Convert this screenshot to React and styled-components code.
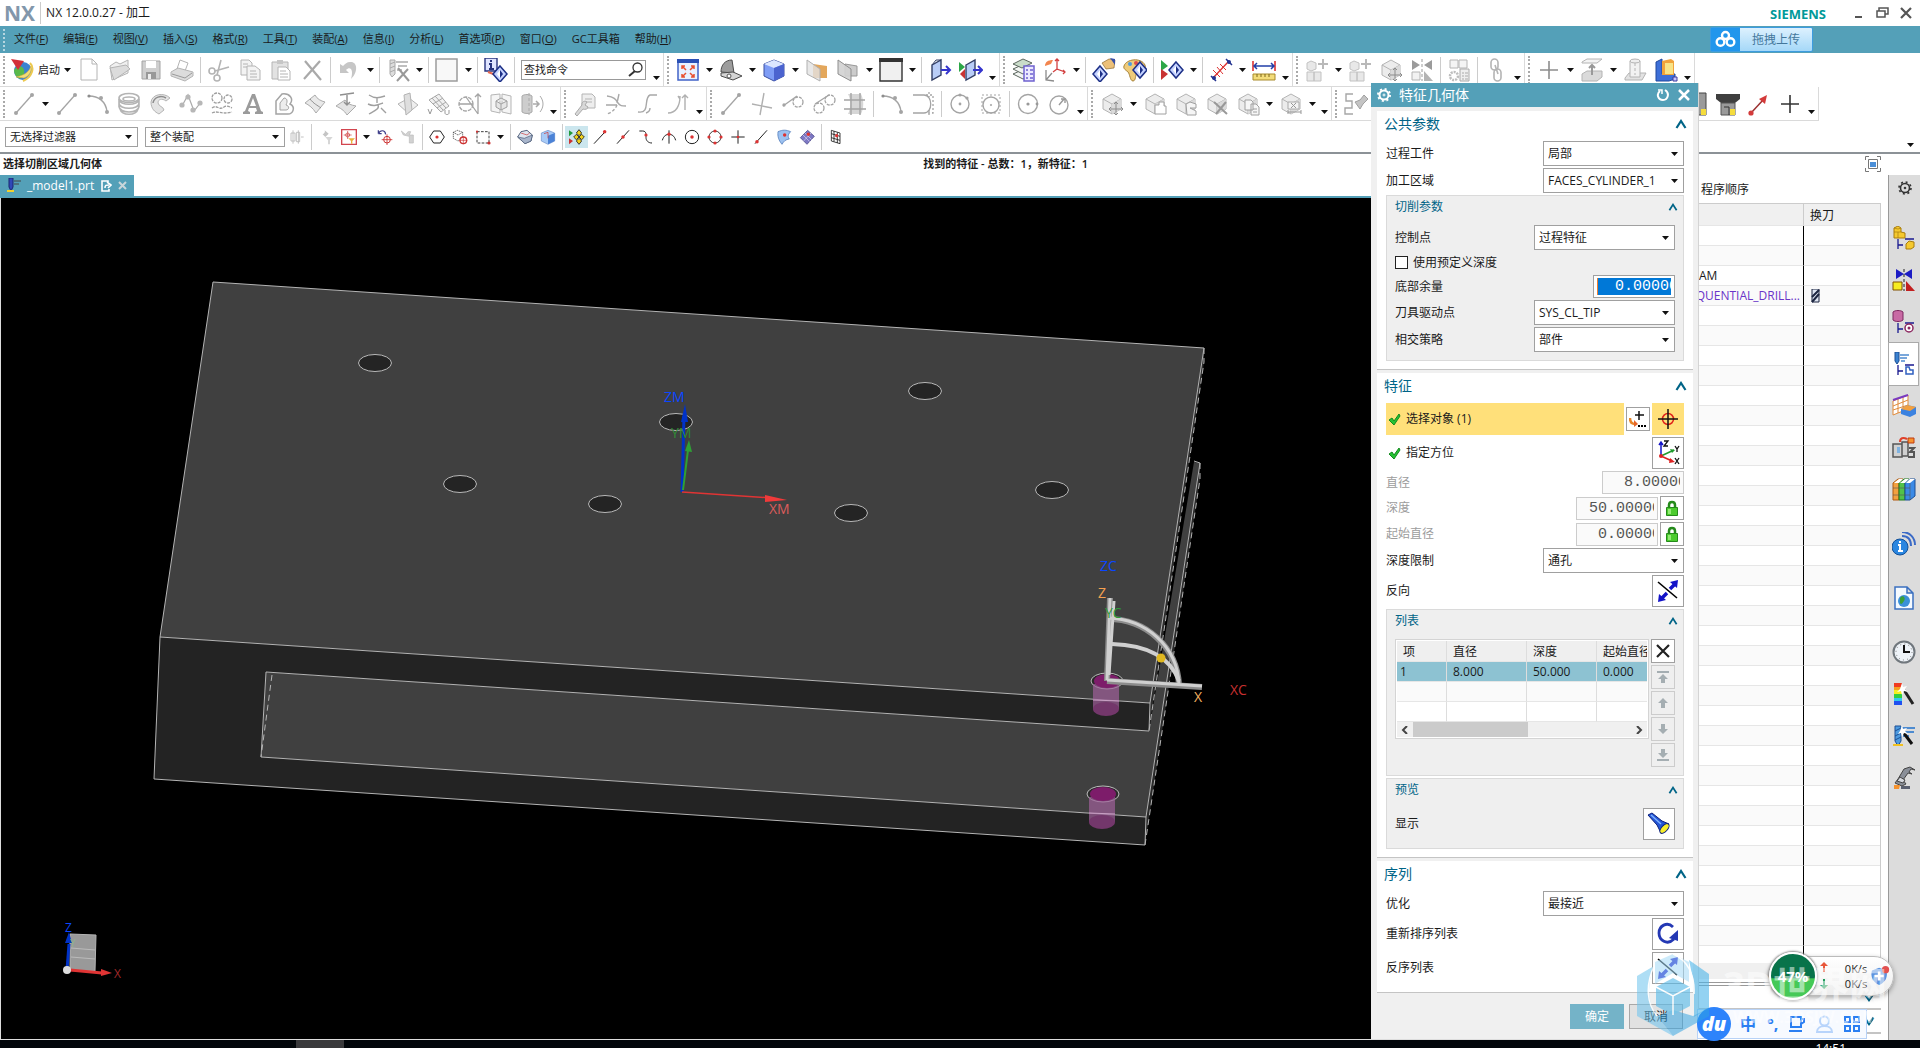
import React from 'react';
import styled, { createGlobalStyle, css } from 'styled-components';

const teal = '#54a0b8';
const ink = '#006487';
const g = '#b4b4b4';

const GlobalStyle = createGlobalStyle`
  * { box-sizing: border-box; }
  body {
    margin: 0;
    background: #fff;
    color: #1a1a1a;
    font: 12px/16px "Open Sans", "Noto Sans CJK SC", sans-serif;
  }
  button, input, select { font: inherit; color: inherit; margin: 0; }
  button { cursor: pointer; }
  svg { display: block; flex: none; }
`;

/* ---------- toolbar drawings, all on a 24 x 24 grid ---------- */

const box = (
  <>
    <path d="M3 7l9-5 9 5v10l-9 5-9-5z" fill="#ececec" stroke={g} />
    <path d="M3 7l9 5 9-5M12 12v10" fill="none" stroke={g} />
    <path d="M12 12l9-5v10l-9 5z" fill="#dadada" />
  </>
);

const diamond = (x, y) => (
  <g transform={`translate(${x} ${y})`}>
    <path d="M0-8l7 8-7 8-7-8z" fill="#c4d2ff" stroke="#1c2f86" strokeWidth="1.5" />
    <path d="M0-4l3 4-3 4z" fill="#1c2f86" />
    <path d="M0-4l-3 4 3 4z" fill="#fff" />
  </g>
);

const boxPlus = (
  <>
    <path d="M2 5l4-2 5 2v6l-5 2-4-2zM2 14h7v9H2zM9 14h7v9H9z" fill="#e8e8e8" stroke="#c2c2c2" />
    <path d="M18 1v10M13 6h10" stroke="#b9b9b9" strokeWidth="2" />
  </>
);

const icons = {
  globe: (
    <>
      <circle cx="13" cy="13" r="9" fill="#3b82d0" />
      <path d="M8 8c5 0 7 3 6 8l-4 5c-4-2-6-5-6-9z" fill="#59b94a" />
      <path d="M14 20c5-2 8-6 7-12-2 6-6 9-15 11z" fill="#f4dd73" stroke="#d9a93a" strokeWidth=".5" />
      <path d="M20 5c5 5 2 14-7 18" fill="none" stroke="#ecc94f" strokeWidth="2" />
      <path d="M1 1l13 2-6 9z" fill="#d32f3a" />
    </>
  ),
  page: <path d="M4 1h11l5 5v16H4zM15 1v5h5" fill="#fff" stroke={g} />,
  open: (
    <>
      <path d="M2 8l6-4 4 2 8-4v13L4 22z" fill="#f0f0f0" stroke={g} />
      <path d="M2 10l16-3 4 4-16 11z" fill="#dcdcdc" stroke={g} />
    </>
  ),
  save: (
    <>
      <path d="M3 3h18v18H3z" fill="#cfcfcf" stroke="#a4a4a4" />
      <path d="M7 3h10v7H7z" fill="#fff" />
      <path d="M7 14h10v7H7z" fill="#999" />
      <path d="M9 16h3v5H9z" fill="#eee" />
    </>
  ),
  print: (
    <>
      <path d="M10 2l8 3-3 8-8-2z" fill="#fff" stroke={g} />
      <path d="M1 14l7-4 15 4v4l-8 5-14-5z" fill="#dcdcdc" stroke={g} />
      <path d="M2 16l13 4 7-5" stroke="#9a9a9a" fill="none" />
    </>
  ),
  cut: (
    <g fill="none" stroke={g} strokeWidth="1.6">
      <circle cx="5" cy="13" r="3" />
      <circle cx="10" cy="20" r="3" />
      <path d="M8 13l14-4M10 17L14 2" />
    </g>
  ),
  copy: (
    <>
      <path d="M3 2h8l3 3v12H3z" fill="#f3f3f3" stroke={g} />
      <path d="M9 8h8l5 4v10H9z" fill="#f3f3f3" stroke={g} />
      <path d="M5 6h5M5 9h4M12 13h6M12 16h7M12 19h7" stroke={g} />
    </>
  ),
  paste: (
    <>
      <path d="M3 4h16v17H3z" fill="#e2e2e2" stroke={g} />
      <path d="M8 2h6v4H8z" fill="#c6c6c6" />
      <path d="M9 9h8l4 4v9H9z" fill="#fff" stroke={g} />
      <path d="M11 13h6M11 16h8M11 19h8" stroke={g} />
    </>
  ),
  del: <path d="M5 3l16 19M20 3L4 21" stroke="#a9a9a9" strokeWidth="2.2" />,
  undo: <path d="M3 6v9h9l-3-3c4-4 8-1 5 9 8-8 6-18-1-17-3 0-5 2-7 4z" fill="#c6c6c6" />,
  drillx: (
    <>
      <path d="M4 2h5v14l-3 3-2-3zM4 6l5-2M4 10l5-2M4 14l5-2" fill="#ddd" stroke="#aaa" />
      <path d="M10 4h12M12 8h9M11 12h5" stroke="#aaa" strokeWidth="1.5" />
      <path d="M12 10l11 13M22 11L11 23" stroke="#999" strokeWidth="2" />
    </>
  ),
  blank: <path d="M1 1h21v22H1z" fill="#f8f8f8" stroke="#9c9c9c" strokeWidth="1.5" />,
  info: (
    <>
      <path d="M1 0h12v13H1z" fill="#dfe4ff" stroke="#27337f" strokeWidth="1.4" />
      <path d="M7 2v2M5 6h2v5M5 11h5" stroke="#27337f" strokeWidth="2" fill="none" />
      <path d="M4 14l8 3" stroke="#e8694f" strokeWidth="2" />
      {diamond(16, 16)}
    </>
  ),
  fit: (
    <>
      <path d="M2 2h20v20H2z" fill="#e8f1ff" stroke="#4163c8" strokeWidth="1.5" />
      <path d="M1 1h22v4H1z" fill="#2a50b5" />
      <path d="M6 11V8h3M18 11V8h-3M6 16v3h3M18 16v3h-3M6 8l4 4M18 8l-4 4M6 19l4-4M18 19l-4-4" stroke="#e8502f" fill="none" strokeWidth="1.5" />
    </>
  ),
  bracket: (
    <>
      <path d="M2 14C2 7 6 2 13 2l2 13z" fill="#9d9d9d" stroke="#4c4c4c" />
      <path d="M2 15l12-1 9 4-9 4-12-4z" fill="#d5d5d5" stroke="#4c4c4c" />
      <circle cx="10" cy="18" r="2" fill="#fff" stroke="#555" />
    </>
  ),
  cube: (
    <>
      <path d="M2 6l10-4 10 4v12l-10 5-10-5z" fill="#7e9cf5" stroke="#3b4f9f" />
      <path d="M2 6l10 4 10-4-10-4z" fill="#dce6ff" />
      <path d="M12 10l10-4v12l-10 5z" fill="#4b63cf" />
    </>
  ),
  planeOrange: (
    <>
      <path d="M8 6l14 2v12H8z" fill="#e3a75c" />
      <path d="M2 2l13 9v12L2 16z" fill="#e2e2e2" stroke="#b0b0b0" fillOpacity=".8" />
    </>
  ),
  planeGrey: (
    <>
      <path d="M9 6l12 2v10H9z" fill="#ccc" stroke="#999" />
      <path d="M2 2l13 9v12L2 16z" fill="#d2d2d2" stroke="#8e8e8e" fillOpacity=".9" />
    </>
  ),
  window: (
    <>
      <path d="M1 1h22v22H1z" fill="#f0f0f0" stroke="#333" strokeWidth="1.4" />
      <path d="M0 0h24v4H0z" fill="#333" />
    </>
  ),
  door: (
    <>
      <path d="M4 7l9-5v15l-9 5z" fill="#b9cdf7" stroke="#333f66" strokeWidth="1.4" />
      <path d="M4 7l4-5h5" fill="none" stroke="#333f66" />
      <path d="M13 12h8M18 8l4 4-4 4" fill="none" stroke="#3535cd" strokeWidth="2" />
    </>
  ),
  doorRun: (
    <>
      <path d="M7 7l9-5v15l-9 5z" fill="#b9cdf7" stroke="#333f66" strokeWidth="1.4" />
      <path d="M0 4l6 5-6 5z" fill="#2ca747" />
      <path d="M6 11l-5 5 5 5z" fill="#c93333" />
      <path d="M14 12h8M19 8l4 4-4 4" fill="none" stroke="#3535cd" strokeWidth="2" />
    </>
  ),
  layers: (
    <>
      <path d="M1 16l9-4 10 4-9 5z" fill="#f2f5f2" stroke="#5b665e" />
      <path d="M1 11l9-4 10 4-9 5z" fill="#f2f5f2" stroke="#5b665e" />
      <path d="M1 6l10-5 9 4-10 5z" fill="#c9dcc9" stroke="#5b665e" />
      <path d="M12 8h10v15H12z" fill="#ebe9ff" stroke="#6f62cf" strokeWidth="1.5" />
      <path d="M14 12h2M18 12h3M14 16h2M18 16h3M14 20h2M18 20h3" stroke="#6f62cf" strokeWidth="1.5" />
    </>
  ),
  csys: (
    <>
      <path d="M14 2v9l8 3M14 11l-4 3M12 3l2-2 2 2M20 12l2 2-2 2" fill="none" stroke="#d34040" strokeWidth="1.3" />
      <path d="M3 12v10l8 1M3 22l6-7" fill="none" stroke="#8b8b8b" strokeWidth="1.3" />
      <path d="M2 8c0-4 3-6 8-6l-2 4z" fill="#f2854f" />
    </>
  ),
  handDiamond: (
    <>
      {diamond(8, 16)}
      <path d="M10 5l7-4 6 1-1 8-8 1z" fill="#ecc079" stroke="#8d6a31" strokeWidth=".7" />
      <path d="M18 0l5 1v6z" fill="#3850a8" />
    </>
  ),
  palette: (
    <>
      <path d="M1 8C3 1 18-1 22 7c2 6-5 5-8 8-2 2-1 8-4 8s-3-7-5-9-5-3-4-6z" fill="#eecb7a" stroke="#a8833a" />
      <circle cx="7" cy="6" r="2" fill="#4d9be0" />
      <circle cx="13" cy="5" r="2" fill="#e04d4d" />
      {diamond(17, 12)}
    </>
  ),
  playDiamond: (
    <>
      <path d="M1 2l7 6-7 5z" fill="#2ca747" />
      <path d="M1 11l7 5-7 6z" fill="#c93333" />
      {diamond(16, 12)}
    </>
  ),
  measure: (
    <>
      <path d="M4 20L20 3" stroke="#d33" strokeWidth="1.4" />
      <path d="M4 12l7 7M8 9l6 7M11 6l6 6" stroke="#d33" />
      <path d="M2 18l5 5M17 1l6 6" stroke="#223290" strokeWidth="1.5" />
      <circle cx="5" cy="20" r="2" fill="#223290" />
      <circle cx="20" cy="4" r="2" fill="#223290" />
    </>
  ),
  ruler: (
    <>
      <path d="M1 3v10M23 3v10" stroke="#d33" strokeWidth="1.6" />
      <path d="M2 8h20M5 5L2 8l3 3M19 5l3 3-3 3" stroke="#223fa8" strokeWidth="1.5" fill="none" />
      <path d="M1 16h22v6H1z" fill="#f3dc7a" stroke="#a98b2d" />
      <path d="M5 16v3M9 16v3M13 16v3M17 16v3" stroke="#7d661b" />
    </>
  ),
  boxPlus,
  boxMove: (
    <>
      {box}
      <path d="M16 10v13M9 17h14M14 12l2-2 2 2M14 21l2 2 2-2M11 15l-2 2 2 2M21 15l2 2-2 2" stroke="#8c8c8c" fill="none" />
    </>
  ),
  mirror: (
    <>
      <path d="M2 2l8 5-8 5zM22 2l-8 5 8 5z" fill="#9b9b9b" />
      <path d="M12 1v22" stroke="#9b9b9b" strokeDasharray="3 2" />
      <path d="M2 14h8v8H2z" fill="#f2f2f2" stroke={g} />
      <path d="M14 13l9 10h-9z" fill="#b4b4b4" />
    </>
  ),
  gears: (
    <>
      <path d="M3 2h8v8H3zM12 2h8v8h-8z" fill="#f4f4f4" stroke={g} />
      <circle cx="7" cy="18" r="4" fill="none" stroke="#bdbdbd" strokeWidth="2.5" strokeDasharray="2 1" />
      <path d="M13 11h9v12h-9z" fill="#eee" stroke="#aaa" />
      <path d="M15 15h2M18 15h3M15 18h2M18 18h3M15 21h2M18 21h3" stroke="#aaa" />
    </>
  ),
  chain: (
    <g fill="none" stroke={g} strokeWidth="1.6">
      <rect x="7" y="1" width="7" height="11" rx="3.5" />
      <rect x="10" y="11" width="7" height="12" rx="3.5" />
      <path d="M11 7l3 9" />
    </g>
  ),
  plus: <path d="M12 3v18M3 12h18" stroke="#8d8d8d" strokeWidth="1.6" />,
  plusDark: <path d="M12 3v18M3 12h18" stroke="#333" strokeWidth="1.6" />,
  extrude: (
    <>
      <path d="M2 4l5-3h15l-5 4H2z" fill="#f4f4f4" stroke={g} />
      <path d="M2 16l5-3h15v6l-5 4H2z" fill="#dadada" stroke={g} />
      <path d="M12 17V8M9 10l3-3 3 3" stroke="#999" strokeWidth="2" fill="none" />
    </>
  ),
  cylinder: (
    <>
      <path d="M2 20l4-5h17l-4 7H2z" fill="#e2e2e2" stroke={g} />
      <path d="M7 3h10v16H7z" fill="#f2f2f2" stroke={g} />
      <ellipse cx="12" cy="3" rx="5" ry="2" fill="#eee" stroke={g} />
      <path d="M12 5v12" stroke={g} strokeDasharray="3 2" />
    </>
  ),
  block: (
    <>
      <path d="M2 4l6-3v15h13v5l-6 2H2z" fill="#3d6fd8" stroke="#21489c" />
      <path d="M8 3l9-2 3 2v14H8z" fill="#f1a33b" />
      <path d="M11 5h8v11h-8z" fill="#f8e487" />
      <path d="M19 19h4v4h-4z" fill="#c5c5ff" stroke="#3b3b9e" />
    </>
  ),
  line: (
    <>
      <path d="M4 21L20 3" stroke="#a4a4a4" strokeWidth="1.3" />
      <circle cx="4" cy="21" r="2" fill="#a4a4a4" />
      <circle cx="20" cy="3" r="2" fill="#a4a4a4" />
    </>
  ),
  arc: (
    <>
      <path d="M3 4c9 0 17 5 18 16" stroke="#a4a4a4" strokeWidth="1.4" fill="none" />
      <circle cx="3" cy="4" r="1.6" fill="#8d8d8d" />
      <circle cx="15" cy="6" r="2" fill="#a4a4a4" />
      <circle cx="21" cy="20" r="2" fill="#a4a4a4" />
    </>
  ),
  spring: (
    <g fill="none" stroke="#b4b4b4" strokeWidth="1.6">
      <ellipse cx="12" cy="6" rx="10" ry="4.500" />
      <ellipse cx="12" cy="7" rx="6" ry="2" />
      <path d="M2 7c0 7 20 7 20 0M2 11c0 7 20 7 20 0M2 14c0 8 20 8 20 0M3 17c2 7 16 7 18 0M2 7v8M22 7v8" />
    </g>
  ),
  wrap: (
    <>
      <path d="M3 10C4 2 16 0 22 6l-4 3c-4-3-8-2-8 2 1 4 5 3 6 7l-5 4C7 20 3 17 3 10z" fill="#e4e4e4" stroke={g} />
      <path d="M5 11c1-6 8-8 13-5" stroke="#8c8c8c" fill="none" strokeWidth="1.5" />
    </>
  ),
  spline: (
    <>
      <path d="M3 14L9 3l6 16 7-9" stroke="#aaa" fill="none" strokeWidth="1.2" />
      {[[3, 13], [9, 5], [14, 18], [21, 11]].map(([x, y]) => (
        <circle key={x} cx={x} cy={y} r="2.6" fill="#b7b7b7" />
      ))}
    </>
  ),
  faces: (
    <g fill="none" stroke="#9e9e9e" strokeWidth="1.3" strokeDasharray="3 1">
      <circle cx="7" cy="6" r="5" />
      <circle cx="18" cy="7" r="4" />
      <path d="M2 16c5-4 7 3 12-1 3-2 6 0 8 1M2 21c6-3 9 2 20-1" />
    </g>
  ),
  letter: <path d="M2 22v-2l2-1L11 2h3l6 17 2 1v2h-8v-2l2-1-1-3H8l-1 3 2 1v2zM9 14h6l-3-8z" fill="#9b9b9b" fillRule="evenodd" />,
  shape: (
    <>
      <path d="M4 22V9l6-7c8-1 12 5 8 10 6 3 3 10-2 10z" fill="#fff" stroke="#a4a4a4" strokeWidth="1.5" />
      <path d="M8 18v-7l4-5c3 0 4 3 2 7 4 1 3 5 0 5z" fill="#ededed" stroke="#a4a4a4" />
    </>
  ),
  surf: (
    <>
      <path d="M2 11L12 3c2 4 6 6 10 7L13 21c-3-5-7-8-11-10z" fill="#e9e9e9" stroke="#ababab" />
      <path d="M7 7c4 5 7 6 11 9" stroke="#8f8f8f" fill="none" />
    </>
  ),
  surfDown: (
    <>
      <path d="M2 14l9-6c2 4 6 5 11 6l-9 9c-3-5-7-7-11-9z" fill="#e4e4e4" stroke="#ababab" />
      <path d="M6 3l14-2M13 3v10M10 10l3 3 3-3" stroke="#8f8f8f" fill="none" strokeWidth="1.4" />
    </>
  ),
  hook: <path d="M4 3c6 4 10 3 16 1M12 5v6M3 12c6 3 9 1 15-1M13 13c2 4-4 6-9 9M16 16l5 5" stroke="#a0a0a0" fill="none" strokeWidth="1.4" />,
  planes: (
    <>
      <path d="M2 12l11-6 9 7-10 8z" fill="#eee" stroke={g} />
      <path d="M8 3l6-2 2 17-6 5z" fill="#dedede" stroke={g} />
    </>
  ),
  mesh: (
    <>
      <path d="M2 8L12 2l10 12-8 6z" fill="#f0f0f0" stroke="#a8a8a8" />
      <path d="M5 6l11 12M8 4l11 12M6 12l10-6M10 16l9-6" stroke="#a8a8a8" />
      <path d="M1 17l2 5 2-5M18 18v3c0 2 4 2 4 0v-3" stroke="#999" fill="none" />
    </>
  ),
  section: (
    <g fill="none" stroke="#a4a4a4" strokeWidth="1.3">
      <circle cx="8" cy="12" r="7" strokeDasharray="4 1" />
      <path d="M1 12h14M8 5l12 17M20 22V2M17 5l3-3 3 3" />
    </g>
  ),
  copyFace: (
    <>
      <path d="M2 3l9-1v19l-9-2zM13 2l9 2v18l-9-2z" fill="#f5f5f5" stroke="#b5b5b5" />
      <path d="M7 9l5-3 6 3v6l-6 3-5-3zM7 9l5 3 6-3M12 12v6" fill="#e5e5e5" stroke="#a0a0a0" />
    </>
  ),
  cylArrow: (
    <>
      <path d="M2 4c2-2 8-2 10 0v16c-2 2-8 2-10 0z" fill="#cdcdcd" stroke="#aaa" />
      <path d="M9 1v22" stroke="#aaa" strokeDasharray="3 2" />
      <path d="M13 12h5M16 9l3 3-3 3" stroke="#aaa" fill="none" strokeWidth="1.5" />
      <path d="M20 4c4 5 4 11 0 16" stroke="#aaa" fill="none" />
    </>
  ),
  wrench: (
    <>
      <path d="M9 2h10l3 3v11H9z" fill="#eee" stroke={g} />
      <path d="M12 7h7M12 10h7" stroke={g} />
      <path d="M2 22l7-9c-1-3 3-5 5-3l-2 3 3 2c0 2-3 3-5 2l-6 7z" fill="#d8d8d8" stroke="#aaa" />
    </>
  ),
  trim: (
    <g fill="none" stroke="#a8a8a8" strokeWidth="1.4">
      <path d="M3 4c8 1 9 4 11 7s4 3 8 3M2 13h11M15 2l-2 9" />
      <path d="M13 13c-2 5-5 7-10 9" strokeDasharray="3 2" />
    </g>
  ),
  bend: <path d="M3 20c13 2 5-14 12-17h7M11 21c3-1 4-3 4-5" fill="none" stroke="#a8a8a8" strokeWidth="1.4" />,
  offset: <path d="M2 21c8 0 12-7 12-17M19 3v15M16 6l3-3 3 3M14 7l-2-3" fill="none" stroke="#b0b0b0" strokeWidth="1.4" />,
  cross: <path d="M14 1l-4 22M2 12l20 4" stroke="#b0b0b0" strokeWidth="1.4" />,
  tan: (
    <g fill="none" stroke="#a4a4a4" strokeWidth="1.3">
      <path d="M2 14L16 4" />
      <circle cx="17" cy="10" r="5" strokeDasharray="3 1" />
      <circle cx="3" cy="13" r="1" />
    </g>
  ),
  tan2: (
    <g fill="none" stroke="#a4a4a4" strokeWidth="1.3">
      <path d="M3 12L17 3" />
      <circle cx="7" cy="16" r="5" strokeDasharray="3 1" />
      <circle cx="18" cy="8" r="5" strokeDasharray="3 1" />
    </g>
  ),
  grid: (
    <>
      <path d="M5 2h13c3 6 3 14 0 20H5c3-6 3-14 0-20z" fill="#d6d6d6" />
      <path d="M1 8h21M1 17h22M8 1v22M17 1v22" stroke="#a4a4a4" strokeWidth="1.4" />
    </>
  ),
  corner: (
    <g fill="none" stroke="#a4a4a4" strokeWidth="1.3">
      <path d="M2 3h11c9 0 9 18 0 18H2" />
      <path d="M15 3h7v18h-7M18 0v5M18 18v5" strokeDasharray="2 2" />
    </g>
  ),
  circle3: (
    <>
      <circle cx="12" cy="12" r="9" fill="none" stroke="#a4a4a4" strokeWidth="1.4" />
      <circle cx="12" cy="12" r="1.4" fill="#a4a4a4" />
      <circle cx="12" cy="3" r="1.6" fill="#a4a4a4" />
      <circle cx="19" cy="6" r="1.6" fill="#a4a4a4" />
    </>
  ),
  circleBox: (
    <g fill="none" stroke="#a4a4a4">
      <path d="M3 3h18v18H3z" strokeDasharray="2 2" />
      <circle cx="12" cy="13" r="8" strokeWidth="1.4" />
      <circle cx="12" cy="13" r=".7" />
    </g>
  ),
  circleDot: (
    <>
      <circle cx="12" cy="12" r="9.5" fill="none" stroke="#a4a4a4" strokeWidth="1.4" />
      <circle cx="12" cy="12" r="1.6" fill="#999" />
      <circle cx="21" cy="12" r="1.4" fill="#999" />
    </>
  ),
  circleArrow: (
    <>
      <circle cx="12" cy="13" r="9" fill="none" stroke="#a4a4a4" strokeWidth="1.4" />
      <path d="M12 13l5-6M14 7h4v4" fill="none" stroke="#999" strokeWidth="1.4" />
    </>
  ),
  boxPaste: (
    <>
      {box}
      <path d="M12 13h4v-3h5v4h2v8H12z" fill="#fff" stroke="#a0a0a0" />
    </>
  ),
  boxSwap: (
    <>
      {box}
      <path d="M12 12l4-2 6 2v4h-6l6 3v4h-9z" fill="#f5f5f5" stroke="#a0a0a0" />
    </>
  ),
  boxX: (
    <>
      {box}
      <path d="M9 10l13 12M21 10L11 22" stroke="#999" strokeWidth="2" />
    </>
  ),
  boxPages: (
    <>
      {box}
      <path d="M9 8h6l2 2v8H9zM15 12h5l3 3v8h-8z" fill="#f6f6f6" stroke="#a0a0a0" />
      <path d="M17 17h4M17 20h4" stroke="#a0a0a0" />
    </>
  ),
  boxDim: (
    <>
      {box}
      <path d="M9 10h11v7H9z" fill="#f3f3f3" stroke="#aaa" />
      <path d="M12 11l5 5M17 11l-5 5M9 20h13M9 18v4M22 18v4" stroke="#999" />
    </>
  ),
  screw: (
    <>
      <path d="M9 2H2v7h6v7H1v6h8" fill="none" stroke="#a6a6a6" strokeWidth="1.4" />
      <path d="M11 10l5-2 4-5 4 4-5 5-3 5z" fill="#c4c4c4" stroke="#a0a0a0" />
    </>
  ),
  toolPart: (
    <>
      <path d="M9 1h12v22H9z" fill="#9a9a9a" stroke="#444" />
      <path d="M16 17h5v6h-5z" fill="#f5dc3c" />
    </>
  ),
  holder: (
    <>
      <path d="M0 2h24v5l-5 4H5L0 7z" fill="#3f3f3f" />
      <path d="M5 11h14v12H5z" fill="#9a9a9a" stroke="#555" />
      <path d="M14 17h5v6h-5z" fill="#f5dc3c" />
      <path d="M8 15h5v8" fill="none" stroke="#333" />
    </>
  ),
  vector: (
    <>
      <path d="M4 21L17 7" stroke="#9b3030" strokeWidth="1.5" />
      <path d="M20 3l-2 9-6-5z" fill="#d33a3a" />
      <circle cx="4" cy="21" r="2.6" fill="#d33a3a" />
    </>
  ),
  /* selection bar */
  selBox: <path d="M3 6h6v12H3zM11 5h5v14h-5zM6 2v20M14 2v20M18 12h4" fill="none" stroke="#bdbdbd" strokeWidth="1.4" />,
  selFilter: (
    <>
      <path d="M2 3l5 5c3-1 4-4 3-6l6 5-5 5z" fill="#c4c4c4" />
      <path d="M11 12h11l-4 5v6h-3v-6z" fill="#d6d6d6" />
    </>
  ),
  selTarget: (
    <>
      <path d="M1 1h22v22H1z" fill="#fff" stroke="#d2454f" strokeWidth="2" />
      <circle cx="10" cy="9" r="3" fill="none" stroke="#c33" />
      <path d="M10 3v12M4 9h12" stroke="#c33" />
      <path d="M11 14h10l-4 4v4h-2v-4z" fill="#eab13b" />
    </>
  ),
  undoTarget: (
    <>
      <path d="M2 7V2M2 7h5M2 7c3-6 10-6 11 1" fill="none" stroke="#3c3c88" strokeWidth="1.8" />
      <circle cx="15" cy="16" r="5" fill="none" stroke="#c33" strokeWidth="1.5" />
      <path d="M15 8v16M7 16h16" stroke="#c33" strokeWidth="1.3" />
    </>
  ),
  selGrey: <path d="M2 3l6 5c3-1 2-5 8-4l-2 5h6v12h-6V11L5 9z" fill="#d2d2d2" stroke="#b9b9b9" />,
  hexDot: (
    <>
      <path d="M7 3h10l6 9-6 9H7l-6-9z" fill="none" stroke="#222" strokeWidth="1.5" />
      <circle cx="12" cy="12" r="2.4" fill="#d33" />
    </>
  ),
  cubeTarget: (
    <>
      <path d="M2 5l6-3 8 3v9l-7 4-7-4zM2 5l7 4 7-4" fill="none" stroke="#222" strokeDasharray="2 1" />
      <circle cx="17" cy="17" r="5" fill="#fff" stroke="#c33" strokeWidth="2" />
      <path d="M17 11v12M11 17h12" stroke="#c33" />
    </>
  ),
  marquee: (
    <>
      <path d="M3 4h18v17H3z" fill="none" stroke="#333" strokeWidth="1.4" strokeDasharray="4 2" />
      <circle cx="3" cy="4" r="1.6" fill="#c33" />
      <circle cx="21" cy="21" r="2.4" fill="#c33" />
    </>
  ),
  cubeEdge: (
    <>
      <path d="M1 12l5-8 9-2 8 7-2 9-9 4z" fill="#dfe6f0" stroke="#4b5a76" strokeWidth="1.4" />
      <path d="M1 12l10 2 12-5-2 9-9 4z" fill="#a9b6cc" stroke="#4b5a76" />
      <path d="M6 6l9 3 4-3" stroke="#c33" fill="none" />
    </>
  ),
  cubeBlue: (
    <>
      <path d="M2 6l10-4 10 4v12l-10 5-10-5z" fill="#a8cbf7" stroke="#6d8ec7" />
      <path d="M12 10l10-4v12l-10 5z" fill="#4b82d6" />
      <path d="M6 7l6-2v9" stroke="#c33" fill="none" />
    </>
  ),
  snapAll: (
    <>
      <path d="M0 2l6 4-6 5z" fill="#1f9b3c" />
      <path d="M0 14l6 4-6 5z" fill="#c33" />
      <path d="M15 1l4 5-4 4-4-4zM15 14l4 4-4 5-4-5zM7 12l4-4 4 4-4 4zM15 12l4-4 4 4-4 4z" fill="#f0d21c" stroke="#222" strokeWidth="1.3" />
    </>
  ),
  snapEnd: (
    <>
      <path d="M3 22L18 6" stroke="#222" strokeWidth="1.5" />
      <circle cx="19" cy="4" r="2.6" fill="#d33" />
    </>
  ),
  snapMid: (
    <>
      <path d="M3 22L21 2" stroke="#222" strokeWidth="1.5" />
      <circle cx="12" cy="12" r="2.6" fill="#d33" />
    </>
  ),
  snapCurve: (
    <>
      <path d="M2 3h5c6 0 5 6 5 10s3 8 9 8" fill="none" stroke="#222" strokeWidth="1.5" />
      <circle cx="12" cy="9" r="2.4" fill="#d33" />
    </>
  ),
  snapCross: (
    <>
      <path d="M2 17c2-7 6-9 10-9s8 2 10 9M12 2v20" fill="none" stroke="#222" strokeWidth="1.5" />
      <circle cx="12" cy="8" r="2.6" fill="#d33" />
    </>
  ),
  snapCenter: (
    <>
      <circle cx="12" cy="12" r="10" fill="none" stroke="#222" strokeWidth="1.5" />
      <circle cx="12" cy="12" r="2.6" fill="#d33" />
    </>
  ),
  snapQuad: (
    <>
      <circle cx="12" cy="12" r="9" fill="none" stroke="#222" strokeWidth="1.3" />
      {[[12, 3], [12, 21], [3, 12], [21, 12]].map(([x, y]) => (
        <circle key={`${x}-${y}`} cx={x} cy={y} r="2.4" fill="#d33" />
      ))}
    </>
  ),
  snapPoint: (
    <>
      <path d="M12 2v20M2 12h20" stroke="#222" strokeWidth="1.5" />
      <circle cx="12" cy="12" r="2" fill="#d33" />
    </>
  ),
  snapOn: (
    <>
      <path d="M3 22L21 2" stroke="#222" strokeWidth="1.5" />
      <circle cx="6" cy="19" r="2.6" fill="#d33" />
    </>
  ),
  snapFace: (
    <>
      <path d="M3 4c7-3 12-3 19 0-5 5-4 8-2 11-6 1-8 3-11 8-5-6-7-12-6-19z" fill="#9cc1f0" stroke="#3e6bb0" />
      <circle cx="13" cy="9" r="2.6" fill="#d33" />
    </>
  ),
  snapMesh: (
    <>
      <path d="M2 13L13 2l10 9-11 12z" fill="#7d78c4" stroke="#39347a" />
      <path d="M6 9l10 10M9 6l10 10M7 18L18 6" stroke="#d9d7f4" />
      <circle cx="14" cy="8" r="2.6" fill="#d33" />
    </>
  ),
  snapGrid: (
    <>
      <path d="M5 2l13 4v16L5 18zM5 7l13 4M5 13l13 4M9 3v16M14 5v16" fill="#fff" stroke="#222" strokeWidth="1.3" />
      <circle cx="13" cy="10" r="2.4" fill="#d33" />
    </>
  ),
};

const Icon = ({ name, size = 24 }) => (
  <svg width={size} height={size} viewBox="0 0 24 24">{icons[name]}</svg>
);

/* 'v' is a drop-down arrow, '|' a separator */
const topBars = [
  ['fit', 'v', 'bracket', 'v', 'cube', 'v', 'planeOrange', 'planeGrey', 'v', 'window', 'v', '|', 'door', 'doorRun'],
  ['layers', 'csys', 'v', '|', 'handDiamond', 'palette', '|', 'playDiamond', 'v', '|', 'measure', 'v', 'ruler'],
  ['boxPlus', 'v', 'boxPlus', 'boxMove', 'mirror', '|', 'gears', '|', 'chain'],
  ['plus', 'v', 'extrude', 'v', 'cylinder', 'block'],
];

const curveBars = [
  ['line', 'v', 'line', 'arc', 'spring', 'wrap', 'spline', 'faces', 'letter', 'shape', 'surf', 'surfDown', 'hook', 'planes', 'mesh', 'section', 'copyFace', 'cylArrow'],
  ['wrench', 'trim', 'bend', 'offset'],
  ['line', 'cross', 'tan', 'tan2', 'grid', '|', 'arc', 'corner', '|', 'circle3', 'circleBox', '|', 'circleDot', 'circleArrow'],
  ['boxMove', 'v', 'boxPaste', 'boxSwap', 'boxX', 'boxPages', 'v', 'boxDim', 'v'],
  ['screw', 'holder', 'holder', 'holder', 'holder', 'holder', 'holder', 'holder', 'holder', 'holder', 'holder', 'toolPart', 'holder', 'vector', 'plusDark'],
];

const snapBar = ['selBox', '|', 'selFilter', 'selTarget', 'v', 'undoTarget', 'selGrey', '|', 'hexDot', 'cubeTarget', 'marquee', 'v', '|', 'cubeEdge', 'cubeBlue', '|', 'snapAll', 'snapEnd', 'snapMid', 'snapCurve', 'snapCross', 'snapCenter', 'snapQuad', 'snapPoint', 'snapOn', 'snapFace', 'snapMesh', '|', 'snapGrid'];

const menus = [
  ['文件', 'F'], ['编辑', 'E'], ['视图', 'V'], ['插入', 'S'], ['格式', 'R'], ['工具', 'T'],
  ['装配', 'A'], ['信息', 'I'], ['分析', 'L'], ['首选项', 'P'], ['窗口', 'O'], ['GC工具箱'], ['帮助', 'H'],
];

const Page = styled.div`
  position: relative;
  display: flex;
  flex-direction: column;
  height: 100vh;
  overflow: hidden;
`;

const TitleBar = styled.header`
  display: flex;
  align-items: center;
  height: 26px;
  padding: 0 2px 0 4px;
`;

const Logo = styled.b`
  padding-right: 5px;
  border-right: 1px solid #ccc;
  color: #8297ab;
  font-size: 21px;
  line-height: 22px;
`;

const AppTitle = styled.h1`
  flex: 1;
  margin: 0 0 0 5px;
  font-size: 12px;
  font-weight: 400;
`;

const Brand = styled.b`
  margin-right: 20px;
  padding-top: 2px;
  color: #009999;
  font-size: 13px;
`;

const WindowButton = styled.button`
  display: grid;
  place-items: center;
  width: 24px;
  height: 24px;
  padding: 0;
  border: 0;
  background: none;
`;

const MenuBar = styled.nav`
  display: flex;
  align-items: center;
  gap: 15px;
  height: 27px;
  padding-right: 107px;
  background: ${teal};
  font-size: 11px;
`;

const MenuButton = styled.button`
  padding: 0 0 2px;
  border: 0;
  background: none;
`;

const Handle = styled.i`
  width: 8px;
  height: 28px;
  flex: none;
  border-left: 2px dotted #a9a9a9;
  margin-left: 3px;
  margin-right: -3px;
`;

const MenuHandle = styled(Handle)`
  height: 22px;
  margin-right: -12px;
  border-left-color: #b7d6e0;
`;

const Upload = styled.button`
  display: flex;
  align-items: center;
  height: 25px;
  margin-left: auto;
  padding: 0 12px 0 0;
  border: 1px solid #3d9ce0;
  border-radius: 2px;
  background: linear-gradient(#ddf1fe, #a5d8f8);
  color: #44779b;
  font-size: 12px;
  svg {
    margin-right: 12px;
    background: #2196ec;
  }
`;

const BarRow = styled.div`
  display: flex;
  height: 34px;
`;

const Bar = styled.div`
  display: flex;
  align-items: center;
  flex: none;
  border-bottom: 1px solid #dadada;
  border-right: 1px solid #dadada;
`;

const ToolButton = styled.button`
  display: grid;
  place-items: center;
  flex: none;
  width: ${p => (p.$small ? 23 : 31)}px;
  height: ${p => (p.$small ? 22 : 30)}px;
  padding: 0;
  border: 0;
  background: ${p => (p.$active ? '#cbe6ee' : 'none')};
`;

const ArrowButton = styled.button`
  display: grid;
  justify-items: center;
  align-items: ${p => (p.$low ? 'end' : 'center')};
  flex: none;
  width: ${p => (p.$small || p.$low ? 13 : 12)}px;
  height: 20px;
  padding: 0;
  border: 0;
  background: none;
`;

const Separator = styled.i`
  flex: none;
  width: 6px;
  height: 26px;
  background: linear-gradient(#ccc, #ccc) center / 1px 100% no-repeat;
`;

const StartButton = styled.button`
  display: flex;
  align-items: center;
  gap: 4px;
  width: 65px;
  padding: 0 0 0 2px;
  border: 0;
  background: none;
  font-size: 11px;
`;

const SearchBox = styled.label`
  display: flex;
  align-items: center;
  width: 125px;
  height: 20px;
  margin: 0 4px;
  padding-right: 2px;
  border: 1px solid #999;
  input {
    flex: 1;
    min-width: 0;
    padding: 0 2px;
    border: 0;
    outline: 0;
    font-size: 11px;
  }
  input::placeholder { color: #1a1a1a; opacity: 1; }
`;

const SelectionRow = styled.div`
  display: flex;
  align-items: center;
  height: 33px;
  padding: 0 3px 0 5px;
  border-bottom: 2px solid #8c9297;
`;

const RowEnd = styled.span`
  margin-left: auto;
`;

const SelectBox = styled.span`
  display: inline-grid;
  align-items: center;
  flex: none;
  width: ${p => p.$w || 141}px;
  height: ${p => p.$h || 25}px;
  margin-right: ${p => p.$mr || 0}px;
  select {
    grid-area: 1 / 1;
    width: 100%;
    height: 100%;
    padding: 0 4px;
    border: 1px solid #a0a0a0;
    border-radius: 0;
    background: #fff;
    appearance: none;
    font-size: ${p => (p.$h ? 11 : 12)}px;
  }
  select:focus { outline: 1px solid ${teal}; }
  svg {
    grid-area: 1 / 1;
    justify-self: end;
    margin-right: 6px;
    pointer-events: none;
  }
`;

const CueRow = styled.div`
  display: grid;
  grid-template-columns: 49% 1fr auto;
  align-items: center;
  height: 21px;
  padding: 0 39px 2px 3px;
  font-size: 11px;
  font-weight: 600;
`;

const Workspace = styled.div`
  display: flex;
  flex: 1;
  min-height: 0;
`;

const Main = styled.main`
  display: flex;
  flex: 1;
  flex-direction: column;
  min-width: 0;
`;

const TabStrip = styled.div`
  display: flex;
  border-bottom: 2px solid ${teal};
`;

const FileTab = styled.div`
  display: flex;
  align-items: center;
  gap: 6px;
  height: 21px;
  padding: 0 7px 0 6px;
  background: ${teal};
  color: #fff;
`;

const Viewport = styled.div`
  flex: 1;
  min-height: 0;
  border-left: 1px solid #ddd;
  border-bottom: 1px solid #ddd;
  background: #000;
`;

const Navigator = styled.aside`
  display: flex;
  flex-direction: column;
  width: 190px;
  padding: 0 7px 0 1px;
`;

const NavTitle = styled.h2`
  height: 28px;
  margin: 0;
  padding: 2px 0 0 2px;
  font-size: 12px;
  font-weight: 400;
  line-height: 26px;
`;

const OperationTable = styled.table`
  width: 100%;
  border-top: 1px solid #ccc;
  border-right: 1px solid #ccc;
  border-spacing: 0;
  table-layout: fixed;
  th, td {
    height: 20px;
    padding: 0;
    overflow: hidden;
    border-bottom: 1px solid #e6e6e6;
    text-align: left;
    font-weight: 400;
    white-space: nowrap;
  }
  th { height: 22px; padding-top: 2px; background: #f0f0f0; }
  th:first-child { width: 105px; border-right: 1px solid #ccc; }
  th:last-child { padding-left: 6px; }
  td:first-child { border-right: 1px solid #000; }
  td:last-child { padding-left: 7px; }
  tr:nth-child(even) td { background: #fafafa; }
  tbody tr:last-child td { height: 15px; border-bottom: 0; }
`;

const OperationName = styled.td`
  color: ${p => (p.$accent ? '#6a35c8' : 'inherit')};
  direction: ${p => (p.$accent ? 'rtl' : 'ltr')};
  && { padding-right: ${p => (p.$accent ? 4 : 0)}px; }
`;

const NavFoot = styled.div`
  margin-top: auto;
  padding-bottom: 6px;
`;

const NavScroll = styled.div`
  height: 16px;
  margin-bottom: 3px;
  background: #f0f0f0;
`;

const NavSection = styled.div`
  display: flex;
  align-items: center;
  justify-content: flex-end;
  height: 24px;
  padding-right: 6px;
  border-bottom: 2px solid #c4c4c4;
`;

const NavDivider = styled.div`
  height: 4px;
  border-top: 1px solid #999;
  border-bottom: 1px solid #999;
`;

const Rail = styled.nav`
  width: 32px;
  border-left: 1px solid #999;
  background: #dcdcdc;
`;

const RailButton = styled.button`
  display: grid;
  place-items: center;
  width: 29px;
  height: 42px;
  margin-bottom: ${p => p.$after || 0}px;
  padding: 0;
  border: 0;
  background: none;
  ${p => p.$first && css`
    width: 32px;
    height: 26px;
  `}
  ${p => p.$active && css`
    background: #fff;
    box-shadow: 0 0 0 1px #aaa;
  `}
`;

const Taskbar = styled.footer`
  display: flex;
  height: 8px;
  padding: 0 74px 0 296px;
  overflow: hidden;
  background: #02060a;
  color: #fff;
  font-size: 12px;
  line-height: 18px;
  i {
    width: 48px;
    margin-right: auto;
    background: #3a3a3c;
  }
`;

/* ---------- dialog ---------- */

const Dialog = styled.form`
  position: absolute;
  top: 83px;
  right: 221px;
  bottom: 9px;
  width: 328px;
  background: #f0f0f0;
  border-right: 1px solid #d4d4d4;
`;

const DialogTitle = styled.div`
  display: flex;
  align-items: center;
  gap: 8px;
  height: 24px;
  margin-bottom: 4px;
  padding: 0 8px 0 6px;
  background: ${teal};
  color: #fff;
  font-size: 14px;
  span { flex: 1; }
`;

const Section = styled.section`
  margin: 0 5px 3px 6px;
  padding: 0 9px 8px;
  border-bottom: 1px solid #c4c4c4;
  background: #fff;
`;

const SectionHead = styled.h3`
  display: flex;
  align-items: center;
  justify-content: space-between;
  height: 30px;
  margin: 0 -3px 0 -2px;
  padding-bottom: 5px;
  color: ${ink};
  font-size: 14px;
  font-weight: 400;
`;

const Group = styled.div`
  margin-top: 2px;
  padding: 0 8px 8px;
  border: 1px solid #dadada;
  background: #efefef;
`;

const GroupHead = styled.h4`
  display: flex;
  align-items: center;
  justify-content: space-between;
  height: 29px;
  margin: 0 -3px 0 0;
  padding-bottom: 8px;
  color: ${ink};
  font-size: 12px;
  font-weight: 400;
`;

const Row = styled.div`
  display: flex;
  align-items: center;
  gap: 2px;
  min-height: ${p => p.$h || 23}px;
  margin-top: 2px;
  h3 + &, h4 + & { margin-top: 0; }
  > label, > span:first-child { flex: 1; }
  > label { color: ${p => (p.$off ? '#9c9c9c' : 'inherit')}; }
`;

const Pick = styled.span`
  display: flex;
  align-items: center;
  gap: 5px;
  height: 32px;
  padding-left: 2px;
  background: ${p => (p.$on ? '#ffe07a' : 'none')};
`;

const SquareButton = styled.button`
  display: grid;
  place-items: center;
  flex: none;
  width: ${p => (p.$small ? 24 : 32)}px;
  height: ${p => (p.$small ? 24 : 32)}px;
  padding: 0;
  border: 1px solid ${p => (p.$faint ? '#ccc' : '#a0a0a0')};
  background: ${p => (p.$faint ? '#efefef' : '#fff')};
  ${p => p.$on && css`
    border-color: #ffe07a;
    background: #ffe07a;
  `}
`;

const NumberInput = styled.input`
  width: 82px;
  height: 23px;
  padding: 0 3px 0 ${p => p.$indent}px;
  border: 1px solid #ccc;
  background: #fafafa;
  color: #555;
  font: 15px "Liberation Mono", monospace;
  outline: 0;
  ${p => p.$picked && css`
    padding-right: 0;
    border: 3px solid #fff;
    border-width: 3px 4px;
    outline: 1px solid #a0a0a0;
    outline-offset: -1px;
    background: #0078d7;
    box-shadow: inset 1px 0 #f08030;
    color: #fff;
  `}
`;

const Check = styled.label`
  display: flex;
  align-items: center;
  gap: 5px;
  input {
    width: 13px;
    height: 13px;
    border: 1px solid #222;
    background: #fff;
    appearance: none;
  }
`;

const ListArea = styled.div`
  display: flex;
  align-items: flex-start;
  justify-content: space-between;
`;

const ListBox = styled.div`
  width: 254px;
  padding: 1px;
  border: 1px solid #d4d4d4;
  background: #fff;
`;

const FeatureTable = styled.table`
  width: 100%;
  border-spacing: 0;
  table-layout: fixed;
  th, td {
    height: 20px;
    padding: 0 0 0 6px;
    overflow: hidden;
    border-right: 1px solid #ddd;
    border-bottom: 1px solid #e6e6e6;
    font-weight: 400;
    text-align: left;
    white-space: nowrap;
  }
  th { height: 21px; padding-top: 1px; background: #efefef; }
  th:nth-child(1) { width: 50px; }
  th:nth-child(2) { width: 80px; }
  th:nth-child(3) { width: 70px; }
  th:last-child, td:last-child { border-right: 0; }
  tr:nth-child(1) td { background: #8dc2d2; }
  tr:nth-child(2) td { background: #fafafa; }
  td:first-child { padding-left: 3px; }
`;

const ScrollBar = styled.div`
  display: flex;
  align-items: center;
  justify-content: space-between;
  height: 15px;
  padding: 0 4px;
  background: #f0f0f0;
  i {
    width: 115px;
    height: 15px;
    margin: 0 auto 0 5px;
    background: #cbcbcb;
  }
`;

const SideButtons = styled.div`
  display: grid;
  gap: 2px;
`;

const DialogFoot = styled.div`
  display: flex;
  justify-content: flex-end;
  gap: 5px;
  padding: 8px 15px 0;
`;

const FootButton = styled.button`
  width: 54px;
  height: 25px;
  padding: 0;
  border: 1px solid ${p => (p.$primary ? '#74b3c8' : '#a8a8a8')};
  background: ${p => (p.$primary ? '#74b3c8' : '#e1e1e1')};
  color: ${p => (p.$primary ? '#fff' : '#222')};
`;

/* ---------- floating desktop widgets ---------- */

const SpeedPill = styled.div`
  position: absolute;
  right: 26px;
  bottom: 52px;
  display: grid;
  grid-template: 100% / 48px 14px 40px 1fr;
  align-items: center;
  width: 126px;
  height: 40px;
  border: 1px solid #bbb;
  border-radius: 20px;
  background: linear-gradient(#fff, #ececec);
  box-shadow: 0 2px 5px rgba(0, 0, 0, 0.35);
  font-size: 11px;
`;

const Ball = styled.b`
  display: grid;
  place-items: center;
  width: 48px;
  height: 48px;
  border: 2px solid #fff;
  border-radius: 50%;
  background: linear-gradient(#08734a 0 55%, #45c957 56%);
  box-shadow: 0 0 2px 1px #888;
  color: #fff;
  font-size: 15px;
`;

const Rates = styled.span`
  display: grid;
  justify-items: center;
  padding-left: 10px;
  line-height: 15px;
`;

const ImeBar = styled.div`
  position: absolute;
  right: 53px;
  bottom: 9px;
  display: flex;
  align-items: center;
  justify-content: space-between;
  width: 170px;
  height: 30px;
  padding: 0 6px 0 42px;
  border: 1px solid #b7d2f7;
  background: #f7faff;
  color: #2b7ff2;
  font-size: 16px;
  font-weight: 700;
`;

const ImeLogo = styled.b`
  position: absolute;
  left: -1px;
  display: grid;
  place-items: center;
  width: 34px;
  height: 34px;
  border-radius: 50%;
  background: #2d83fb;
  color: #fff;
  font-size: 20px;
  font-style: italic;
`;

const Stamp = styled.div`
  position: absolute;
  right: 27px;
  bottom: 12px;
  display: flex;
  align-items: center;
  gap: 8px;
  color: rgba(255, 255, 255, 0.5);
  pointer-events: none;
  svg { opacity: 0.8; }
`;

const StampText = styled.div`
  display: grid;
  justify-items: center;
  width: 176px;
  font-size: 38px;
  font-weight: 700;
  line-height: 44px;
  white-space: nowrap;
  small {
    font-size: 16px;
    line-height: 22px;
  }
`;

const Arrow = () => (
  <svg width="7" height="4" viewBox="0 0 7 4"><path d="M0 0h7L3.500 4z" fill="#111" /></svg>
);

const Chevron = ({ small, down }) => (
  <svg width={small ? 10 : 12} height={small ? 8 : 10} viewBox="0 0 12 10">
    <path d={down ? 'M1.500 1.500L6 8l4.500-6.500' : 'M1.500 9L6 2l4.500 7'} fill="none" stroke={ink} strokeWidth="2.2" />
  </svg>
);

const Tools = ({ items, small }) => items.map((item, i) => {
  if (item === '|') return <Separator key={i} />;
  if (item === 'v') return <ArrowButton key={i} type="button" aria-label="more" $small={small}><Arrow /></ArrowButton>;
  return (
    <ToolButton key={i} type="button" aria-label={item} $small={small} $active={item === 'snapAll'}>
      <Icon name={item} size={small ? 16 : 24} />
    </ToolButton>
  );
});

const ToolBar = ({ items, children }) => (
  <Bar>
    <Handle />
    {children}
    <Tools items={items} />
    <ArrowButton type="button" aria-label="options" $low><Arrow /></ArrowButton>
  </Bar>
);

const Select = ({ id, value, w, h, mr }) => (
  <SelectBox $w={w} $h={h} $mr={mr}>
    <select id={id} aria-label={value} defaultValue={value}><option>{value}</option></select>
    <Arrow />
  </SelectBox>
);

const SelectRow = ({ id, label, value }) => (
  <Row>
    <label htmlFor={id}>{label}</label>
    <Select id={id} value={value} />
  </Row>
);

const Tick = () => (
  <svg width="13" height="13" viewBox="0 0 13 13">
    <path d="M1 7l3-2 2 3 5-7 1 2-6 9z" fill="#25c233" stroke="#128a1e" />
  </svg>
);

const Lock = () => (
  <svg width="14" height="17" viewBox="0 0 14 17">
    <path d="M4 8V5c0-4 6-4 6 0v3" fill="none" stroke="#258a1b" strokeWidth="2.500" />
    <path d="M1.500 7.500h11v8h-11z" fill="#4ccb2e" stroke="#258a1b" />
    <path d="M3 9h3v5H3z" fill="#93ec75" />
  </svg>
);

const Reverse = () => (
  <svg width="24" height="24" viewBox="0 0 24 24">
    <path d="M6 19l5-5M14 10l5-5" stroke="#1414c8" strokeWidth="3.500" />
    <path d="M22 1l-1 8-7-6zM2 23l1-8 7 6z" fill="#1414c8" />
    <path d="M2 3l19 16" stroke="#000" strokeWidth="1.6" />
  </svg>
);

const moves = [
  ['top', 'M1 1h12v2H1zM7 4l5 5H9v4H5V9H2z'],
  ['up', 'M7 2l5 5H9v5H5V7H2z'],
  ['down', 'M7 12l5-5H9V2H5v5H2z'],
  ['bottom', 'M7 10l5-5H9V1H5v4H2zM1 11h12v2H1z'],
];

const FeatureDialog = () => (
  <Dialog onSubmit={e => e.preventDefault()}>
    <DialogTitle>
      <svg width="14" height="14" viewBox="0 0 14 14" fill="none" stroke="#fff">
        <circle cx="7" cy="7" r="4.500" strokeWidth="2" />
        <circle cx="7" cy="7" r="6" strokeWidth="2" strokeDasharray="2 2.700" />
        <circle cx="7" cy="7" r="1" />
      </svg>
      <span>特征几何体</span>
      <svg width="14" height="14" viewBox="0 0 14 14" fill="none" stroke="#fff" strokeWidth="2">
        <path d="M9 2c5 3 3 10-2 10S0 6 4 3" />
        <path d="M2 2h4v4" strokeWidth="1.500" />
      </svg>
      <svg width="12" height="12" viewBox="0 0 12 12"><path d="M1 1l10 10M11 1L1 11" stroke="#fff" strokeWidth="2.500" /></svg>
    </DialogTitle>
    <Section>
      <SectionHead>公共参数<Chevron /></SectionHead>
      <SelectRow id="workpiece" label="过程工件" value="局部" />
      <SelectRow id="region" label="加工区域" value="FACES_CYLINDER_1" />
      <Group>
        <GroupHead>切削参数<Chevron small /></GroupHead>
        <SelectRow id="control" label="控制点" value="过程特征" />
        <Row $h={21}><Check><input type="checkbox" />使用预定义深度</Check></Row>
        <Row>
          <label htmlFor="stock">底部余量</label>
          <NumberInput id="stock" defaultValue="0.00000" $indent={18} $picked />
        </Row>
        <SelectRow id="drive" label="刀具驱动点" value="SYS_CL_TIP" />
        <SelectRow id="strategy" label="相交策略" value="部件" />
      </Group>
    </Section>
    <Section>
      <SectionHead>特征<Chevron /></SectionHead>
      <Row>
        <Pick $on><Tick />选择对象 (1)</Pick>
        <SquareButton type="button" aria-label="add point" $small>
          <svg width="18" height="18" viewBox="0 0 18 18">
            <path d="M10 1v9M6 5h9" stroke="#111" strokeWidth="1.500" />
            <path d="M1 8c0 4 2 6 5 6" fill="none" stroke="#e8862a" strokeWidth="2.500" />
            <path d="M5 10l4 4-4 3z" fill="#e8662a" />
            <path d="M9 15h2v2H9zM12 15h2v2h-2zM15 15h2v2h-2z" />
          </svg>
        </SquareButton>
        <SquareButton type="button" aria-label="select" $on>
          <svg width="20" height="20" viewBox="0 0 20 20" fill="none">
            <circle cx="10" cy="10" r="5.500" stroke="#e0241c" strokeWidth="1.500" />
            <path d="M10 0v20M0 10h20" stroke="#111" strokeWidth="1.500" />
          </svg>
        </SquareButton>
      </Row>
      <Row>
        <Pick><Tick />指定方位</Pick>
        <SquareButton type="button" aria-label="orientation">
          <svg width="24" height="26" viewBox="0 0 24 26" fill="none">
            <path d="M5 16V3M3 5l2-3 2 3" stroke="#1414c8" strokeWidth="1.500" />
            <path d="M5 16l13-6" stroke="#1f9b2c" strokeWidth="1.500" />
            <path d="M14 9l5 1-3 3z" fill="#1f9b2c" />
            <path d="M5 16l11 5" stroke="#d22" strokeWidth="1.500" />
            <path d="M19 22l-5-4-1 5z" fill="#d22" />
            <circle cx="5" cy="16" r="2" fill="#d22" />
            <path d="M8 1h4l-4 5h4M19 6l2 3 2-3M21 9v3M19 18l4 6M23 18l-4 6" stroke="#111" strokeWidth="1.300" />
          </svg>
        </SquareButton>
      </Row>
      <Row $off>
        <label htmlFor="diameter">直径</label>
        <NumberInput id="diameter" defaultValue="8.00000" readOnly $indent={21} />
      </Row>
      <Row $off $h={24}>
        <label htmlFor="depth">深度</label>
        <NumberInput id="depth" defaultValue="50.00000" readOnly $indent={12} />
        <SquareButton type="button" aria-label="lock depth" $small><Lock /></SquareButton>
      </Row>
      <Row $off $h={24}>
        <label htmlFor="start">起始直径</label>
        <NumberInput id="start" defaultValue="0.00000" readOnly $indent={21} />
        <SquareButton type="button" aria-label="lock start diameter" $small><Lock /></SquareButton>
      </Row>
      <SelectRow id="limit" label="深度限制" value="通孔" />
      <Row>
        <span>反向</span>
        <SquareButton type="button" aria-label="reverse"><Reverse /></SquareButton>
      </Row>
      <Group>
        <GroupHead>列表<Chevron small /></GroupHead>
        <ListArea>
          <ListBox>
            <FeatureTable>
              <thead><tr><th>项</th><th>直径</th><th>深度</th><th>起始直径</th></tr></thead>
              <tbody>
                <tr><td>1</td><td>8.000</td><td>50.000</td><td>0.000</td></tr>
                <tr><td /><td /><td /><td /></tr>
                <tr><td /><td /><td /><td /></tr>
              </tbody>
            </FeatureTable>
            <ScrollBar>
              <svg width="7" height="8" viewBox="0 0 7 8"><path d="M6 0L2 4l4 4" fill="none" stroke="#444" strokeWidth="2" /></svg>
              <i />
              <svg width="7" height="8" viewBox="0 0 7 8"><path d="M1 0l4 4-4 4" fill="none" stroke="#444" strokeWidth="2" /></svg>
            </ScrollBar>
          </ListBox>
          <SideButtons>
            <SquareButton type="button" aria-label="remove" $small>
              <svg width="14" height="14" viewBox="0 0 14 14"><path d="M1 1l12 12M13 1L1 13" stroke="#222" strokeWidth="2.200" /></svg>
            </SquareButton>
            {moves.map(([name, d]) => (
              <SquareButton key={name} type="button" aria-label={name} $small $faint>
                <svg width="14" height="14" viewBox="0 0 14 14"><path d={d} fill="#a5aeb2" /></svg>
              </SquareButton>
            ))}
          </SideButtons>
        </ListArea>
      </Group>
      <Group>
        <GroupHead>预览<Chevron small /></GroupHead>
        <Row>
          <span>显示</span>
          <SquareButton type="button" aria-label="display">
            <svg width="24" height="24" viewBox="0 0 24 24">
              <path d="M1 3l4-2 10 8 7 3-8 9-4-8z" fill="#2456d6" stroke="#0b1f7a" />
              <path d="M4 3l10 9" stroke="#7fb2ff" strokeWidth="1.500" />
              <ellipse cx="17.500" cy="16.500" rx="6" ry="3" transform="rotate(-48 17.500 16.500)" fill="#f8ee2a" stroke="#0b1f7a" />
            </svg>
          </SquareButton>
        </Row>
      </Group>
    </Section>
    <Section>
      <SectionHead>序列<Chevron /></SectionHead>
      <SelectRow id="optimize" label="优化" value="最接近" />
      <Row>
        <span>重新排序列表</span>
        <SquareButton type="button" aria-label="reorder">
          <svg width="24" height="24" viewBox="0 0 24 24">
            <path d="M17 5c-6-6-14-1-14 6s8 13 15 6" fill="none" stroke="#2438b4" strokeWidth="2.800" />
            <path d="M22 8v11l-9-3z" fill="#2438b4" />
          </svg>
        </SquareButton>
      </Row>
      <Row>
        <span>反序列表</span>
        <SquareButton type="button" aria-label="reverse list"><Reverse /></SquareButton>
      </Row>
    </Section>
    <DialogFoot>
      <FootButton type="submit" $primary>确定</FootButton>
      <FootButton type="button">取消</FootButton>
    </DialogFoot>
  </Dialog>
);

/* ---------- model view ---------- */

const holes = [[375, 363], [925, 391], [676, 422], [460, 484], [605, 504], [851, 513], [1052, 490]];

const Pocket = ({ x, y }) => (
  <g>
    <ellipse cx={x} cy={y} rx="16" ry="8" fill="#2a2a2a" stroke="#bbb" />
    <path d={`M${x - 14} ${y + 3}h26v25h-26z`} fill="#a0609a" fillOpacity=".7" />
    <ellipse cx={x - 1} cy={y + 28} rx="13" ry="7" fill="#73376b" />
    <ellipse cx={x} cy={y} rx="13" ry="7" fill="#7d1c6a" />
    <path d={`M${x - 14} ${y + 19}l26 1`} stroke="#c8a0c4" />
  </g>
);

const Model = () => (
  <svg width="100%" height="100%" viewBox="1 198 1697 841" preserveAspectRatio="xMinYMin meet" fontFamily="Open Sans, sans-serif" fontSize="14">
    <path d="M1150 703L1204 348v14L1149 731z" fill="#2d2d2d" />
    <path d="M266 672l883 59 45-269 6 1-54 354-885-60z" fill="#404040" />
    <path d="M1200 463v16l-55 366 1-28z" fill="#2a2a2a" />
    <path d="M213 282l991 66-54 355-990-66z" fill="#404040" />
    <path d="M160 637l990 66-1 28-883-59-5 85 885 60-1 28-991-66z" fill="#232323" />
    <g fill="none" stroke="#b4b4b4">
      <path d="M213 282l991 66-54 355-990-66zM160 637l-6 142 991 66 1-28-885-60M1150 703l-1 28-883-59-5 85M1194 461l6 2-54 354" />
      <path d="M1204 348v14L1149 731M1200 463v16l-55 366M272 675l-11 82" strokeDasharray="6 4" />
    </g>
    {holes.map(([x, y]) => <ellipse key={x} cx={x} cy={y} rx="16.500" ry="8.500" fill="#242424" stroke="#b8b8b8" />)}

    <path d="M682 492l2-76" stroke="#0032c8" strokeWidth="3" />
    <path d="M685 404l3 18h-7z" fill="#0032c8" />
    <path d="M683 490l5-40" stroke="#2fa035" strokeWidth="2" />
    <path d="M689 440l3 12-7-1z" fill="#2fa035" />
    <path d="M682 492l90 6" stroke="#e03434" strokeWidth="1.500" />
    <path d="M787 500l-22-5v7z" fill="#f03a3a" />
    <text x="664" y="402" fill="#0a46ff">ZM</text>
    <text x="671" y="438" fill="#2f8a35">YM</text>
    <text x="769" y="514" fill="#dc5c5c">XM</text>

    <Pocket x={1107} y={681} />
    <Pocket x={1103} y={794} />
    <g fill="none" stroke="#8c8c8c" strokeWidth="6">
      <path d="M1107 681l3-83M1107 681l95 6M1108 619c38 0 69 28 71 66" />
    </g>
    <g fill="none" stroke="#d0d0d0" strokeWidth="3">
      <path d="M1107 680l3-82M1107 680l95 6M1108 618c38 1 69 28 71 66M1109 675l5-74" />
      <path d="M1112 644c34 1 58 13 67 37" strokeWidth="4" />
    </g>
    <circle cx="1161" cy="658" r="4.500" fill="#e0b820" />
    <text x="1100" y="571" fill="#0a46ff">ZC</text>
    <text x="1098" y="598" fill="#f4a050">Z</text>
    <text x="1105" y="618" fill="#2f9a3a">YC</text>
    <text x="1194" y="702" fill="#f4b060">X</text>
    <text x="1230" y="695" fill="#c83030">XC</text>

    <path d="M70 934l26 1-1 36-25-1z" fill="#999" stroke="#b4b4b4" />
    <path d="M71 948l24 2M71 957l24 2" stroke="#bbb" />
    <path d="M67 970l2-26" stroke="#0032c8" strokeWidth="3" />
    <path d="M69 932l3 11h-7z" fill="#0032c8" />
    <path d="M70 970l32 3" stroke="#e03434" strokeWidth="3" />
    <path d="M112 973l-11-4v7z" fill="#e03434" />
    <circle cx="67" cy="970" r="4" fill="#ddd" />
    <text x="65" y="932" fill="#0a46ff" fontSize="12">Z</text>
    <text x="70" y="947" fill="#8fb58f" fontSize="10">Y</text>
    <text x="114" y="978" fill="#a02828" fontSize="12">X</text>
  </svg>
);

/* ---------- resource bar ---------- */

const tree = (
  <path d="M6 13v10M6 19h5M13 13h9" stroke="#1a1a90" strokeWidth="1.300" fill="none" />
);

const rail = [
  ['settings', 16, <g fill="none" stroke="#333" strokeWidth="1.600"><circle cx="12" cy="12" r="4.500" /><circle cx="12" cy="12" r="6" strokeDasharray="2 2.700" /><circle cx="12" cy="12" r=".5" /></g>],
  ['assembly', 0, <>{tree}<path d="M2 2l4-2 3 2v4l4 1v5H2z" fill="#f5c92e" stroke="#a87d0c" /><path d="M2 6h7M6 6v6M9 2L6 3 2 2" fill="none" stroke="#a87d0c" strokeWidth=".7" /><path d="M14 18l3-3 5 1v5l-3 2h-5z" fill="#f5c92e" stroke="#a87d0c" /></>],
  ['constraints', 0, <><path d="M4 1l8 5-8 5zM20 1l-8 5 8 5z" fill="#1c1cc4" /><path d="M12 1v22" stroke="#222" strokeDasharray="3 2" /><path d="M1 14h9v8H1z" fill="#f6ec22" stroke="#805000" /><path d="M14 13l9 10h-9z" fill="#c22020" /></>],
  ['part', 0, <>{tree}<path d="M1 2c2-2 8-2 10 0v8c-2 2-8 2-10 0z" fill="#c86aa4" stroke="#7c2860" /><circle cx="17" cy="18" r="4" fill="#fff" stroke="#8c2860" strokeWidth="1.500" /><circle cx="17" cy="18" r="1.500" fill="#8c2860" /></>],
  ['operation', 0, <>{tree}<path d="M3 0h4v9l-2 3-2-3z" fill="#3b82d0" stroke="#1c4f94" /><path d="M8 3h9M8 6h7M9 9h4" stroke="#4d8bd0" strokeWidth="1.500" /><path d="M14 15h3l1 3h3v4h-7z" fill="#fff" stroke="#3060c0" strokeWidth="1.500" /></>],
  ['machine', 0, <><path d="M1 7l15-6v14L1 21zM1 12l15-6M1 16l15-5M6 5v14M11 3v14" fill="#fff" stroke="#e08a3a" /><path d="M1 6l15-5" stroke="#7a3ac0" strokeWidth="2" /><path d="M9 15l6-4 9 2v7l-6 3-9-3z" fill="#3b82e0" /><path d="M9 15l6-4 9 2-6 4z" fill="#f2a040" /></>],
  ['post', 0, <><path d="M1 8h9v13H1zM10 6h6v14h-6z" fill="#d0d0d0" stroke="#555" strokeWidth="1.500" /><path d="M5 11h3v6H5z" fill="#7fb2e0" /><path d="M17 12h5l-4 4h4v5h-6" fill="none" stroke="#555" strokeWidth="2" /><path d="M8 6c0-4 3-5 7-3" fill="none" stroke="#e0402a" strokeWidth="2" /><path d="M16 2h6v5h-6z" fill="#f5922e" stroke="#c03a10" /></>],
  ['library', 12, <><path d="M1 5l5-4h5L7 5v17H1z" fill="#f2a040" stroke="#b05a10" /><path d="M7 5l5-4h5l-4 4v17H7z" fill="#52c24a" stroke="#1f7a1c" /><path d="M13 5l5-4h5v17l-5 4h-5z" fill="#3b8ae6" stroke="#1c4f94" /><path d="M2 5l5-4h4L7 5zM8 5l5-4h4l-4 4zM14 5l4-4h5l-5 4z" fill="#fff" /><path d="M1 10h6M1 17h6M7 10h6M7 17h6M13 10h5M13 17h5M18 5v17" stroke="#555" strokeWidth=".6" /></>],
  ['hd3d', 12, <><circle cx="8" cy="15" r="8" fill="#2a86e0" stroke="#114f98" /><path d="M8 9v2M6 13h2v6M6 19h5" stroke="#fff" strokeWidth="2" fill="none" /><path d="M10 4c6 0 9 4 9 10M10 0c8 0 13 6 13 13" fill="none" stroke="#3b6ac6" strokeWidth="2" /></>],
  ['web', 12, <><path d="M3 1h12l6 6v16H3zM15 1v6h6" fill="#f5faff" stroke="#3b70c0" strokeWidth="1.500" /><circle cx="12" cy="15" r="6" fill="#3a90d8" /><path d="M8 12c3-4 6 0 4 3s-3 4-4 2z" fill="#3aa03a" /></>],
  ['history', 0, <><circle cx="12" cy="12" r="10.500" fill="#eef3f8" stroke="#70777d" strokeWidth="2" /><path d="M12 5v7h6" fill="none" stroke="#111" strokeWidth="2" /><circle cx="12" cy="12" r="8" fill="none" stroke="#777" strokeDasharray="1 3.200" /></>],
  ['roles', 0, <><path d="M2 1h8v5H2z" fill="#f03a20" /><path d="M2 5h8v3H2z" fill="#f5a020" /><path d="M2 8h8v4H2z" fill="#f5f020" /><path d="M2 12h8v4H2z" fill="#30d040" /><path d="M2 16h8v3H2z" fill="#30c8f0" /><path d="M2 19h8v4H2z" fill="#2050f0" /><path d="M12 8l9 14" stroke="#222" strokeWidth="3" /><path d="M10 1l1 4 4-1-2 3 3 3-4-1-2 4-1-4-4 1 3-3z" fill="#fff" /></>],
  ['wizard', 0, <><path d="M3 2h6v15l-3 5-3-5zM3 7l6-3M3 12l6-3M3 16l6-3" fill="#4d9be0" stroke="#1c4f94" /><path d="M10 4h13M12 8h10M11 12h6" stroke="#4d8bd0" strokeWidth="2" /><path d="M11 8l9 12" stroke="#111" strokeWidth="3" /><path d="M10 1l1 4 4-1-2 3 3 3-4-1-2 4-1-4-3 1 2-3z" fill="#fff" /><path d="M1 21h10" stroke="#f0c020" strokeWidth="2" /></>],
  ['robot', 0, <><path d="M12 3l6-2 5 3-4-1-2 3 3 2-4-1-5 7 3 4-4 2-7-3 3-4z" fill="#8a8f98" stroke="#444" /><path d="M8 11l5 3-2 3-6-2z" fill="#d5d8de" stroke="#444" /><path d="M2 19h6l-1 4H2z" fill="#f5922e" /><path d="M9 20h9v3H9z" fill="#5a6070" /></>],
];

const rows = Array.from({ length: 37 });

const App = () => (
  <Page>
    <GlobalStyle />
    <TitleBar>
      <Logo>NX</Logo>
      <AppTitle>NX 12.0.0.27 - 加工</AppTitle>
      <Brand>SIEMENS</Brand>
      <WindowButton aria-label="minimize"><svg width="10" height="10" viewBox="0 0 10 10"><path d="M2 9h7" stroke="#555" strokeWidth="2" /></svg></WindowButton>
      <WindowButton aria-label="restore">
        <svg width="13" height="12" viewBox="0 0 13 12"><path d="M3 4V1h9v6H9M1 4h8v6H1z" fill="none" stroke="#555" strokeWidth="1.500" /></svg>
      </WindowButton>
      <WindowButton aria-label="close"><svg width="12" height="12" viewBox="0 0 12 12"><path d="M1 1l10 10M11 1L1 11" stroke="#555" strokeWidth="2.200" /></svg></WindowButton>
    </TitleBar>
    <MenuBar>
      <MenuHandle />
      {menus.map(([label, key]) => (
        <MenuButton key={label} type="button">{label}{key && <>(<u>{key}</u>)</>}</MenuButton>
      ))}
      <Upload type="button">
        <svg width="29" height="23" viewBox="0 0 29 23" fill="none" stroke="#fff" strokeWidth="2.400">
          <circle cx="14.500" cy="7.500" r="3.500" />
          <circle cx="9.500" cy="14" r="3.800" />
          <circle cx="19.500" cy="14" r="3.800" />
        </svg>
        拖拽上传
      </Upload>
    </MenuBar>
    <BarRow>
      <ToolBar items={[]}>
        <StartButton type="button"><Icon name="globe" />启动<Arrow /></StartButton>
        <Tools items={['page', 'open', 'save', 'print', '|', 'cut', 'copy', 'paste', 'del', '|', 'undo', 'v', '|', 'drillx', 'v', '|', 'blank', 'v', '|', 'info', '|']} />
        <SearchBox>
          <input type="text" aria-label="查找命令" placeholder="查找命令" />
          <svg width="15" height="15" viewBox="0 0 15 15" fill="none" stroke="#333">
            <circle cx="9.500" cy="5.500" r="4.500" strokeWidth="1.300" />
            <path d="M7 9l-6 5" strokeWidth="2" />
          </svg>
        </SearchBox>
      </ToolBar>
      {topBars.map((items, i) => <ToolBar key={i} items={items} />)}
    </BarRow>
    <BarRow>
      {curveBars.map((items, i) => <ToolBar key={i} items={items} />)}
    </BarRow>
    <SelectionRow>
      <Select value="无选择过滤器" w={133} h={20} mr={7} />
      <Select value="整个装配" w={140} h={20} />
      <Tools items={snapBar} small />
      <RowEnd><ArrowButton type="button" aria-label="options" $low><Arrow /></ArrowButton></RowEnd>
    </SelectionRow>
    <CueRow>
      <span>选择切削区域几何体</span>
      <span>找到的特征 - 总数：1，新特征：1</span>
      <svg width="16" height="16" viewBox="0 0 16 16" fill="none" stroke="#777">
        <path d="M.5 4V.5H4M12 .5h3.500V4M.5 12v3.500H4M12 15.500h3.500V12M3.500 3.500h9v9h-9z" />
        <path d="M5 6h6v5H5z" fill="#4b8fd8" stroke="none" />
      </svg>
    </CueRow>
    <Workspace>
      <Main>
        <TabStrip>
          <FileTab>
            <svg width="15" height="15" viewBox="0 0 15 15">
              <path d="M3 0h4v9l-2 4-2-4z" fill="#3048b8" stroke="#1a2670" />
              <path d="M8 3h7M8 6h5" stroke="#444" />
              <path d="M1 13h7" stroke="#f0d030" strokeWidth="2" />
            </svg>
            _model1.prt
            <svg width="12" height="12" viewBox="0 0 12 12" fill="none" stroke="#fff" strokeWidth="1.600"><path d="M8 3V1H2v10h7V9M5 8c0-3 1-3 4-3M7 2l4 3-3 3" /></svg>
            <svg width="9" height="9" viewBox="0 0 9 9"><path d="M1 1l7 7M8 1L1 8" stroke="#c9d6da" strokeWidth="2" /></svg>
          </FileTab>
        </TabStrip>
        <Viewport><Model /></Viewport>
      </Main>
      <Navigator>
        <NavTitle>程序顺序</NavTitle>
        <OperationTable>
          <thead><tr><th aria-label="name" /><th>换刀</th></tr></thead>
          <tbody>
            {rows.map((_, i) => (
              <tr key={i}>
                <OperationName $accent={i === 3}>{i === 2 && 'AM'}{i === 3 && <bdi>QUENTIAL_DRILL...</bdi>}</OperationName>
                <td>
                  {i === 3 && (
                    <svg width="9" height="14" viewBox="0 0 9 14">
                      <path d="M1 0h7v13H1z" fill="#dfe6f2" stroke="#1c2540" />
                      <path d="M1 8l7-7M1 13l7-8" stroke="#1c2540" strokeWidth="2" />
                    </svg>
                  )}
                </td>
              </tr>
            ))}
          </tbody>
        </OperationTable>
        <NavFoot>
          <NavScroll />
          <NavDivider />
          <NavSection><Chevron down /></NavSection>
          <NavSection><Chevron down /></NavSection>
        </NavFoot>
      </Navigator>
      <Rail>
        {rail.map(([name, after, art]) => (
          <RailButton key={name} type="button" aria-label={name} $after={after} $first={name === 'settings'} $active={name === 'operation'}>
            <svg width="24" height="24" viewBox="0 0 24 24">{art}</svg>
          </RailButton>
        ))}
      </Rail>
    </Workspace>
    <Taskbar><i /><span>14:51</span></Taskbar>

    <FeatureDialog />

    <SpeedPill>
      <Ball>47%</Ball>
      <svg width="14" height="28" viewBox="3 0 14 28">
        <path d="M10 0l4 4h-3v6H9V4H6z" fill="#e8573a" />
        <path d="M10 27l4-4h-3v-6H9v6H6z" fill="#1f9b5c" />
      </svg>
      <Rates><span>0K/s</span><span>0K/s</span></Rates>
      <svg width="20" height="20" viewBox="0 0 22 22">
        <path d="M1 5l8-3 8 3c2 8-2 13-8 16C3 18-1 13 1 5z" fill="#5b93e0" />
        <path d="M9 6v10M4 11h10" stroke="#fff" strokeWidth="3" />
        <circle cx="16" cy="4" r="4" fill="#e25050" />
      </svg>
    </SpeedPill>
    <ImeBar>
      <ImeLogo>du</ImeLogo>
      <span>中</span>
      <span>°,</span>
      <svg width="16" height="16" viewBox="0 0 16 16" fill="none" stroke="#2b7ff2" strokeWidth="2"><path d="M2 1h10v10H2zM12 3h3v3l-3 2M0 15h13" /></svg>
      <svg width="17" height="18" viewBox="0 0 17 18" fill="none" stroke="#b8d4fb" strokeWidth="2"><circle cx="8.500" cy="6" r="4.500" /><path d="M1 17c0-8 15-8 15 0z" /></svg>
      <svg width="16" height="16" viewBox="0 0 16 16" fill="none" stroke="#2b7ff2" strokeWidth="2"><path d="M1 1h5v5H1zM10 1h5v5h-5zM1 10h5v5H1zM10 10h5v5h-5z" /></svg>
    </ImeBar>
    <Stamp>
      <svg width="72" height="82" viewBox="0 0 72 82">
        <path d="M36 0l16 8v20L36 19 18 30V8z" fill="#a5dcf7" fillOpacity=".7" />
        <path d="M52 6l20 14v34l-15 9V30z" fill="#4cb5ea" fillOpacity=".75" />
        <path d="M36 82L0 62V22l17-10c-8 20-6 38 3 50z" fill="#6fc4ee" fillOpacity=".7" />
        <path d="M36 82L20 62l16-6 20 6 16-8v8z" fill="#2fa3e2" fillOpacity=".65" />
        <path d="M36 24l17 9v19L36 61 19 52V33z" fill="#5bbbe9" fillOpacity=".8" />
        <path d="M19 33l17 9 17-9M36 42v19M17 12C8 32 10 50 20 62M36 0c14 6 22 20 21 40" fill="none" stroke="#fff" strokeWidth="1.500" />
      </svg>
      <StampText>3D世界网<small>WWW.3DSJW.COM</small></StampText>
    </Stamp>
  </Page>
);

export default App;
